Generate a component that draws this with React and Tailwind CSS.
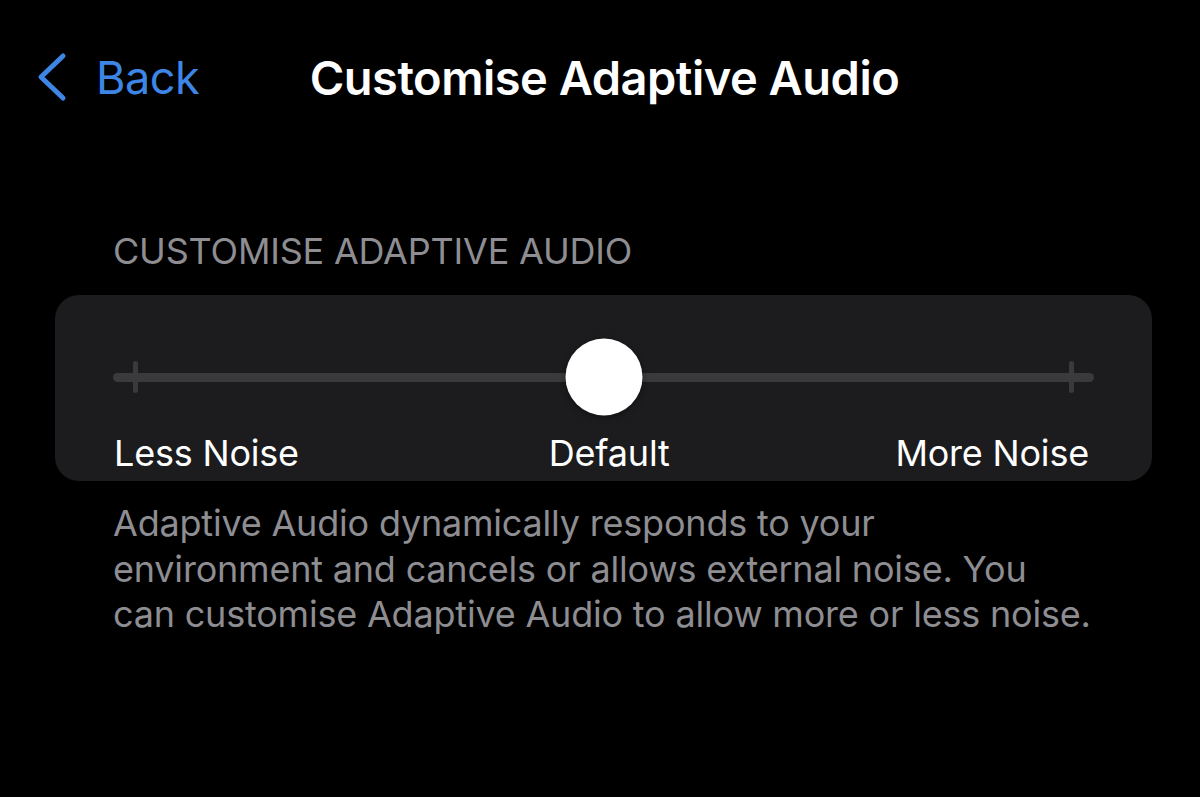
import React from 'react';

const font = { fontFamily: 'Inter, "Noto Sans", sans-serif' };

const Chevron = () => (
  <svg width="34" height="50" viewBox="0 0 34 50" fill="none">
    <path d="M29 4 L7 25 L29 46" stroke="#3d86e6" strokeWidth="5" strokeLinecap="round" strokeLinejoin="round" />
  </svg>
);

const Slider = () => (
  <div className="relative h-[80px] flex items-center">
    {/* track */}
    <div className="w-full h-[9px] rounded-full bg-[#3a3a3d]" />
    {/* end ticks */}
    <div className="absolute left-[20px] top-[24px] w-[5px] h-[32px] rounded-full bg-[#3a3a3d]" />
    <div className="absolute right-[20px] top-[24px] w-[5px] h-[32px] rounded-full bg-[#3a3a3d]" />
    {/* thumb */}
    <div className="absolute left-1/2 top-1/2 -translate-x-1/2 -translate-y-1/2 w-[77px] h-[77px] rounded-full bg-white shadow-[0_2px_6px_rgba(0,0,0,0.4)]" />
  </div>
);

export default function App() {
  return (
    <div className="w-[1200px] h-[797px] bg-black overflow-hidden" style={font}>
      {/* nav bar */}
      <div className="grid grid-cols-[1fr_auto_1fr] items-center h-[50px] mt-[52px]">
        <div className="flex items-center gap-[28px] pl-[34px]">
          <Chevron />
          <span className="text-[45px] leading-none text-[#3d86e6] tracking-[-0.5px]">Back</span>
        </div>
        <h1 className="ml-[9px] text-[47px] leading-none font-semibold text-white tracking-[-0.5px]">Customise Adaptive Audio</h1>
        <div />
      </div>

      {/* section */}
      <div className="pl-[55px] pr-[48px] mt-[131px]">
        <div className="pl-[58px] text-[36px] leading-none text-[#8d8d92] tracking-[-0.2px] uppercase">
          Customise Adaptive Audio
        </div>

        <div className="mt-[26px] rounded-[24px] bg-[#1c1c1e] px-[58px] pt-[42px] pb-[10px]">
          <Slider />
          <div className="flex justify-between items-end text-[36px] leading-none text-white tracking-[-0.2px] mt-[18px] px-[1px]">
            <span>Less Noise</span>
            <span className="ml-[24px]">Default</span>
            <span className="mr-[4px]">More Noise</span>
          </div>
        </div>

        <p className="pl-[58px] mt-[20px] text-[36px] leading-[45.5px] text-[#8d8d92] tracking-[-0.2px]">
          Adaptive Audio dynamically responds to your
          <br />
          environment and cancels or allows external noise. You
          <br />
          can customise Adaptive Audio to allow more or less noise.
        </p>
      </div>
    </div>
  );
}
